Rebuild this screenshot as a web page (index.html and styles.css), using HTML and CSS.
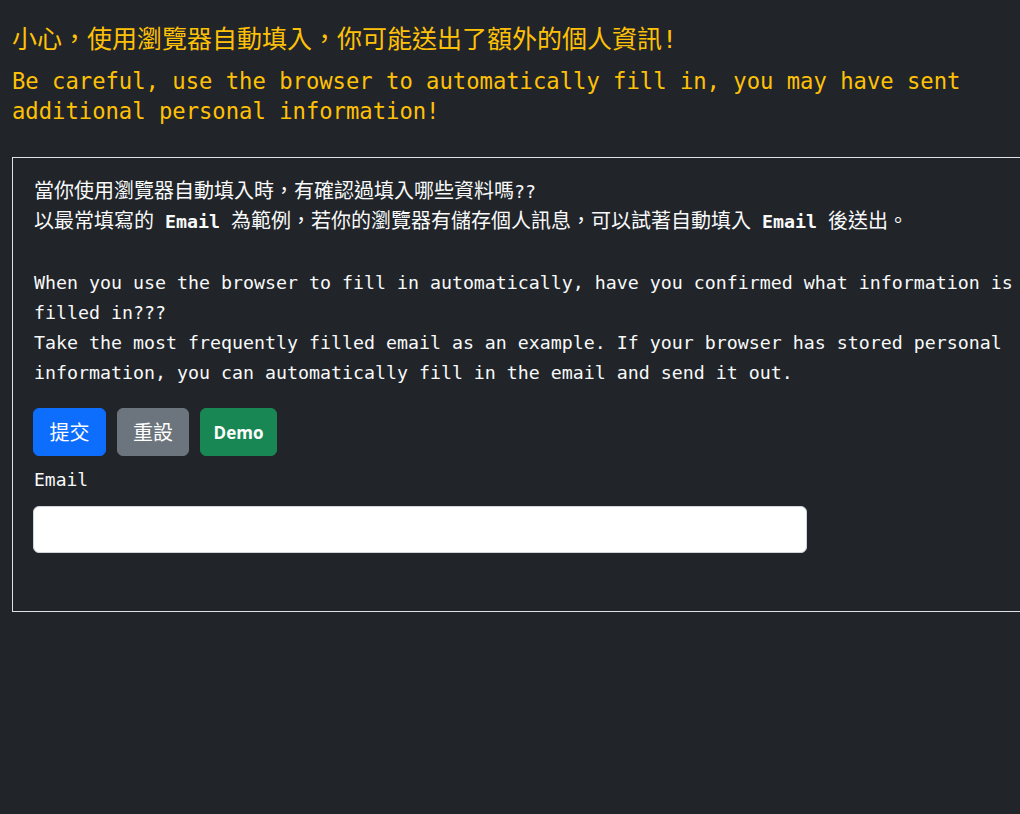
FILE: index.html
```html
<!DOCTYPE html>
<html lang="zh-Hant">
<head>
<meta charset="utf-8">
<title>Autofill warning</title>
<link rel="stylesheet" href="styles.css">
</head>
<body>
<main class="page">
  <h1 class="title-zh">小心，使用瀏覽器自動填入，你可能送出了額外的個人資訊!</h1>
  <h2 class="title-en">Be careful, use the browser to automatically fill in, you may have sent additional personal information!</h2>

  <section class="panel">
    <div class="intro">
      <p class="line zh">當你使用瀏覽器自動填入時，有確認過填入哪些資料嗎<span class="mono">??</span></p>
      <p class="line zh">以最常填寫的<span class="mono"> <b>Email</b> </span>為範例，若你的瀏覽器有儲存個人訊息，可以試著自動填入<span class="mono"> <b>Email</b> </span>後送出。</p>
      <p class="line blank">&nbsp;</p>
      <p class="line">When you use the browser to fill in automatically, have you confirmed what information is filled in???</p>
      <p class="line">Take the most frequently filled email as an example. If your browser has stored personal information, you can automatically fill in the email and send it out.</p>
    </div>

    <form class="form">
      <div class="actions">
        <button type="submit" class="btn btn-primary">提交</button>
        <button type="reset" class="btn btn-secondary">重設</button>
        <button type="button" class="btn btn-success btn-demo">Demo</button>
      </div>
      <label class="label" for="email">Email</label>
      <input class="input" id="email" type="email" autocomplete="email">
    </form>
  </section>
</main>
</body>
</html>
```

FILE: styles.css
```css
html, body {
  margin: 0;
  padding: 0;
  background: #212529;
  overflow: hidden;
}

.page {
  padding: 0 12px;
  font-family: "DejaVu Sans Mono", "Noto Sans CJK TC", monospace;
  color: #f8f9fa;
}

.title-zh {
  margin: 22px 0 0;
  font-size: 25px;
  line-height: 36px;
  font-weight: normal;
  color: #ffc107;
  white-space: nowrap;
}

.title-en {
  margin: 8px 0 0;
  font-size: 22.2px;
  line-height: 30px;
  font-weight: normal;
  color: #ffc107;
  width: 1000px;
}

.panel {
  margin-top: 31px;
  width: 1020px;
  border: 1px solid #dee2e6;
  padding: 18px 21px 58px 21px;
}

.intro {
  font-size: 18.27px;
  line-height: 30px;
  color: #f8f9fa;
}

.line {
  margin: 0;
  height: 30px;
  white-space: nowrap;
}

.line.zh + .line.zh {
  height: 31px;
  line-height: 31px;
}

.line.blank {
  height: 31px;
}

.line:not(.zh):not(.blank) {
  height: auto;
  white-space: normal;
}

.zh {
  font-size: 20px;
}

.zh .mono {
  font-size: 18.27px;
  line-height: 1;
}

.intro b {
  font-weight: bold;
}

.form {
  margin-top: 20px;
}

.actions {
  display: flex;
  gap: 11px;
  margin-left: -1px;
}

.btn {
  height: 48px;
  padding: 0 15px;
  border: 1px solid transparent;
  border-radius: 6px;
  color: #fff;
  font-family: "Noto Sans CJK TC", sans-serif;
  font-size: 20px;
  line-height: 1;
}

.btn-primary { background: #0d6efd; border-color: #0d6efd; padding: 0 15.5px; }
.btn-secondary { background: #6c757d; border-color: #6c757d; }
.btn-success { background: #198754; border-color: #198754; }

.btn-demo {
  font-family: "Open Sans", "Noto Sans", sans-serif;
  font-weight: bold;
  font-size: 17px;
  width: 77px;
  padding: 0;
}

.label {
  display: block;
  margin-top: 9px;
  font-size: 18px;
  line-height: 30px;
  color: #f8f9fa;
}

.input {
  display: block;
  box-sizing: border-box;
  margin: 11px 0 0 -1px;
  width: 774px;
  height: 47px;
  border: 1px solid #ced4da;
  border-radius: 6px;
  background: #fff;
  padding: 0 12px;
  font-size: 18px;
}
```
